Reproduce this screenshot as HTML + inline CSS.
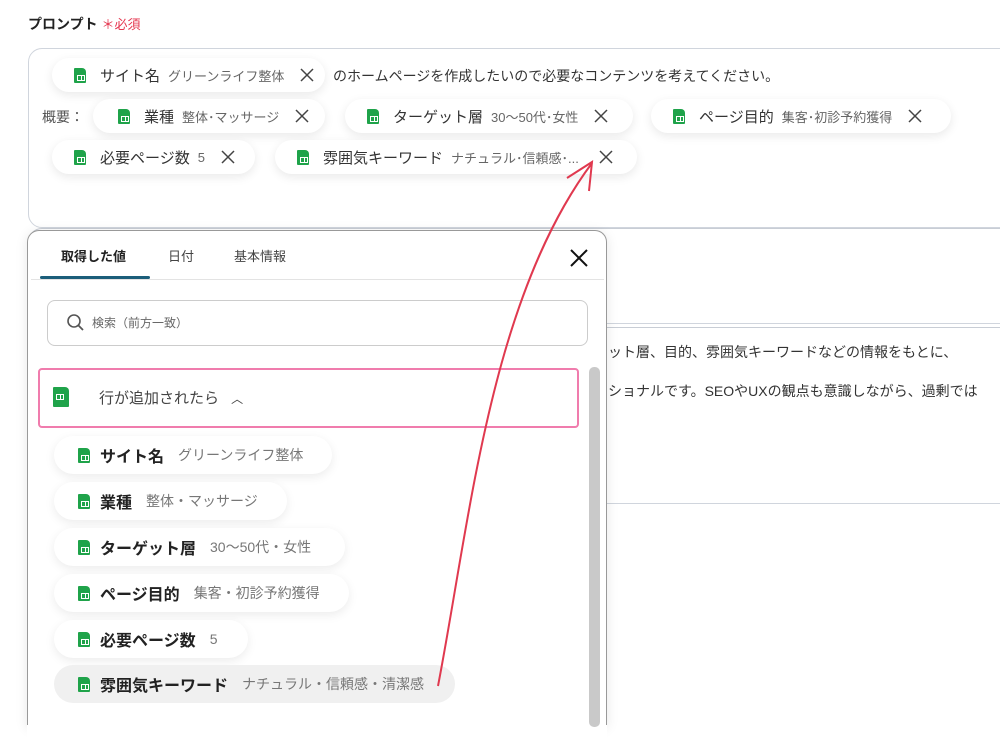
<!DOCTYPE html>
<html><head><meta charset="utf-8"><style>
*{box-sizing:border-box;margin:0;padding:0}
body{width:1000px;height:746px;background:#fff;position:relative;overflow:hidden;font-family:"Liberation Sans","Noto Sans CJK JP",sans-serif;color:#333}
.abs{position:absolute}
.chip{position:absolute;height:34px;background:#fff;border-radius:17px;box-shadow:0 3px 10px rgba(0,0,0,.09);display:flex;align-items:center;white-space:nowrap}
.ic{display:inline-block;width:12px;height:15px;background:#1fa34a;border-radius:1px 4px 1px 1px;position:relative;flex:none}
.ic:after{content:"";position:absolute;left:3px;top:7px;width:6px;height:4px;border:1px solid #fff;background:linear-gradient(#fff,#fff) center/1px 100% no-repeat}
.lbl{font-size:15px;color:#333;margin-left:14px}
.val{font-size:13px;color:#666;margin-left:8px}
.x{width:14px;height:14px;margin-left:16px;flex:none}
.li{position:absolute;left:54px;height:38px;border-radius:19px;background:#fff;box-shadow:0 3px 10px rgba(0,0,0,.08);display:flex;align-items:center;padding-left:24px;white-space:nowrap}
.li b{font-size:16px;color:#222;margin-left:10px}
.li span{font-size:14px;color:#777;margin-left:14px}
</style></head><body>
<div class="abs" style="left:28px;top:14px;font-size:14px;font-weight:bold;color:#222">プロンプト <span style="color:#e5364f;font-weight:normal;font-size:13px">＊必須</span></div>
<div class="abs" style="left:28px;top:48px;width:990px;height:180px;border:1px solid #d0d5dd;border-radius:14px"></div>
<div class="abs" style="left:28px;top:228px;width:990px;height:100px;border:1px solid #c8cdd5;border-radius:14px"></div>
<div class="abs" style="left:600px;top:323px;width:400px;border-top:1px solid #d0d5dd"></div>
<div class="abs" style="left:600px;top:503px;width:400px;border-top:1px solid #d0d5dd"></div>
<div class="abs" style="left:608px;top:342px;font-size:14px;color:#333;white-space:nowrap">ット層、目的、雰囲気キーワードなどの情報をもとに、</div>
<div class="abs" style="left:608px;top:381px;font-size:14px;color:#333;white-space:nowrap">ショナルです。SEOやUXの観点も意識しながら、過剰では</div>

<div class="chip" style="left:52px;top:58px;width:273px;padding-left:22px"><i class="ic"></i><span class="lbl">サイト名</span><span class="val">グリーンライフ整体</span><svg class="x" viewBox="0 0 14 14"><path d="M1 1L13 13M13 1L1 13" stroke="#444" stroke-width="1.5"/></svg></div>
<div class="abs" style="left:333px;top:66px;font-size:14px;color:#333">のホームページを作成したいので必要なコンテンツを考えてください。</div>
<div class="abs" style="left:42px;top:107px;font-size:14px;color:#555">概要：</div>
<div class="chip" style="left:93px;top:99px;width:232px;padding-left:25px"><i class="ic"></i><span class="lbl">業種</span><span class="val">整体･マッサージ</span><svg class="x" viewBox="0 0 14 14"><path d="M1 1L13 13M13 1L1 13" stroke="#444" stroke-width="1.5"/></svg></div>
<div class="chip" style="left:345px;top:99px;width:288px;padding-left:22px"><i class="ic"></i><span class="lbl">ターゲット層</span><span class="val">30〜50代･女性</span><svg class="x" viewBox="0 0 14 14"><path d="M1 1L13 13M13 1L1 13" stroke="#444" stroke-width="1.5"/></svg></div>
<div class="chip" style="left:651px;top:99px;width:300px;padding-left:22px"><i class="ic"></i><span class="lbl">ページ目的</span><span class="val">集客･初診予約獲得</span><svg class="x" viewBox="0 0 14 14"><path d="M1 1L13 13M13 1L1 13" stroke="#444" stroke-width="1.5"/></svg></div>
<div class="chip" style="left:52px;top:140px;width:203px;padding-left:22px"><i class="ic"></i><span class="lbl">必要ページ数</span><span class="val">5</span><svg class="x" viewBox="0 0 14 14"><path d="M1 1L13 13M13 1L1 13" stroke="#444" stroke-width="1.5"/></svg></div>
<div class="chip" style="left:275px;top:140px;width:362px;padding-left:22px"><i class="ic"></i><span class="lbl">雰囲気キーワード</span><span class="val">ナチュラル･信頼感･...</span><svg class="x" style="margin-left:20px" viewBox="0 0 14 14"><path d="M1 1L13 13M13 1L1 13" stroke="#444" stroke-width="1.5"/></svg></div>

<div class="abs" style="left:27px;top:230px;width:580px;height:496px;background:#fff;border:1px solid #999;border-bottom:none;border-radius:12px 12px 0 0;box-shadow:0 2px 12px rgba(0,0,0,.1)"></div>
<div class="abs" style="left:27px;top:725px;width:580px;height:21px;background:#fff"></div>
<div class="abs" style="left:61px;top:246px;font-size:13px;font-weight:bold;color:#222">取得した値</div>
<div class="abs" style="left:168px;top:246px;font-size:13px;color:#444">日付</div>
<div class="abs" style="left:234px;top:246px;font-size:13px;color:#444">基本情報</div>
<div class="abs" style="left:40px;top:276px;width:110px;height:3px;background:#1b5e7a;border-radius:2px"></div>
<div class="abs" style="left:31px;top:279px;width:573px;border-top:1px solid #e3e3e3"></div>
<svg class="abs" style="left:570px;top:249px" width="18" height="18" viewBox="0 0 18 18"><path d="M1 1L17 17M17 1L1 17" stroke="#111" stroke-width="2"/></svg>
<div class="abs" style="left:47px;top:300px;width:541px;height:46px;border:1px solid #ccc;border-radius:8px"></div>
<svg class="abs" style="left:66px;top:313px" width="20" height="20" viewBox="0 0 20 20"><circle cx="8" cy="8" r="6" fill="none" stroke="#555" stroke-width="1.6"/><path d="M12.5 12.5L17 17" stroke="#555" stroke-width="1.8"/></svg>
<div class="abs" style="left:92px;top:314px;font-size:12px;color:#666">検索（前方一致）</div>
<div class="abs" style="left:38px;top:368px;width:541px;height:60px;border:2px solid #f07cad;border-radius:4px"></div>
<i class="ic abs" style="left:53px;top:387px;width:16px;height:20px"></i>
<div class="abs" style="left:99px;top:387px;font-size:15px;color:#444">行が追加されたら <span style="margin-left:8px;font-size:12px">︿</span></div>
<div class="abs" style="left:589px;top:367px;width:11px;height:360px;background:#c9c9c9;border-radius:5px"></div>

<div class="li" style="top:436px;width:278px"><i class="ic"></i><b>サイト名</b><span>グリーンライフ整体</span></div>
<div class="li" style="top:482px;width:233px"><i class="ic"></i><b>業種</b><span>整体・マッサージ</span></div>
<div class="li" style="top:528px;width:291px"><i class="ic"></i><b>ターゲット層</b><span>30〜50代・女性</span></div>
<div class="li" style="top:574px;width:295px"><i class="ic"></i><b>ページ目的</b><span>集客・初診予約獲得</span></div>
<div class="li" style="top:620px;width:194px"><i class="ic"></i><b>必要ページ数</b><span>5</span></div>
<div class="li" style="top:665px;width:401px;background:#f0f0f0;box-shadow:none"><i class="ic"></i><b>雰囲気キーワード</b><span>ナチュラル・信頼感・清潔感</span></div>

<svg class="abs" style="left:0;top:0" width="1000" height="746"><path d="M438 686 C470 520 490 300 592 163" fill="none" stroke="#e0394f" stroke-width="2"/><path d="M567 178 L592 162 L589 191" fill="none" stroke="#e0394f" stroke-width="2"/></svg>
</body></html>
